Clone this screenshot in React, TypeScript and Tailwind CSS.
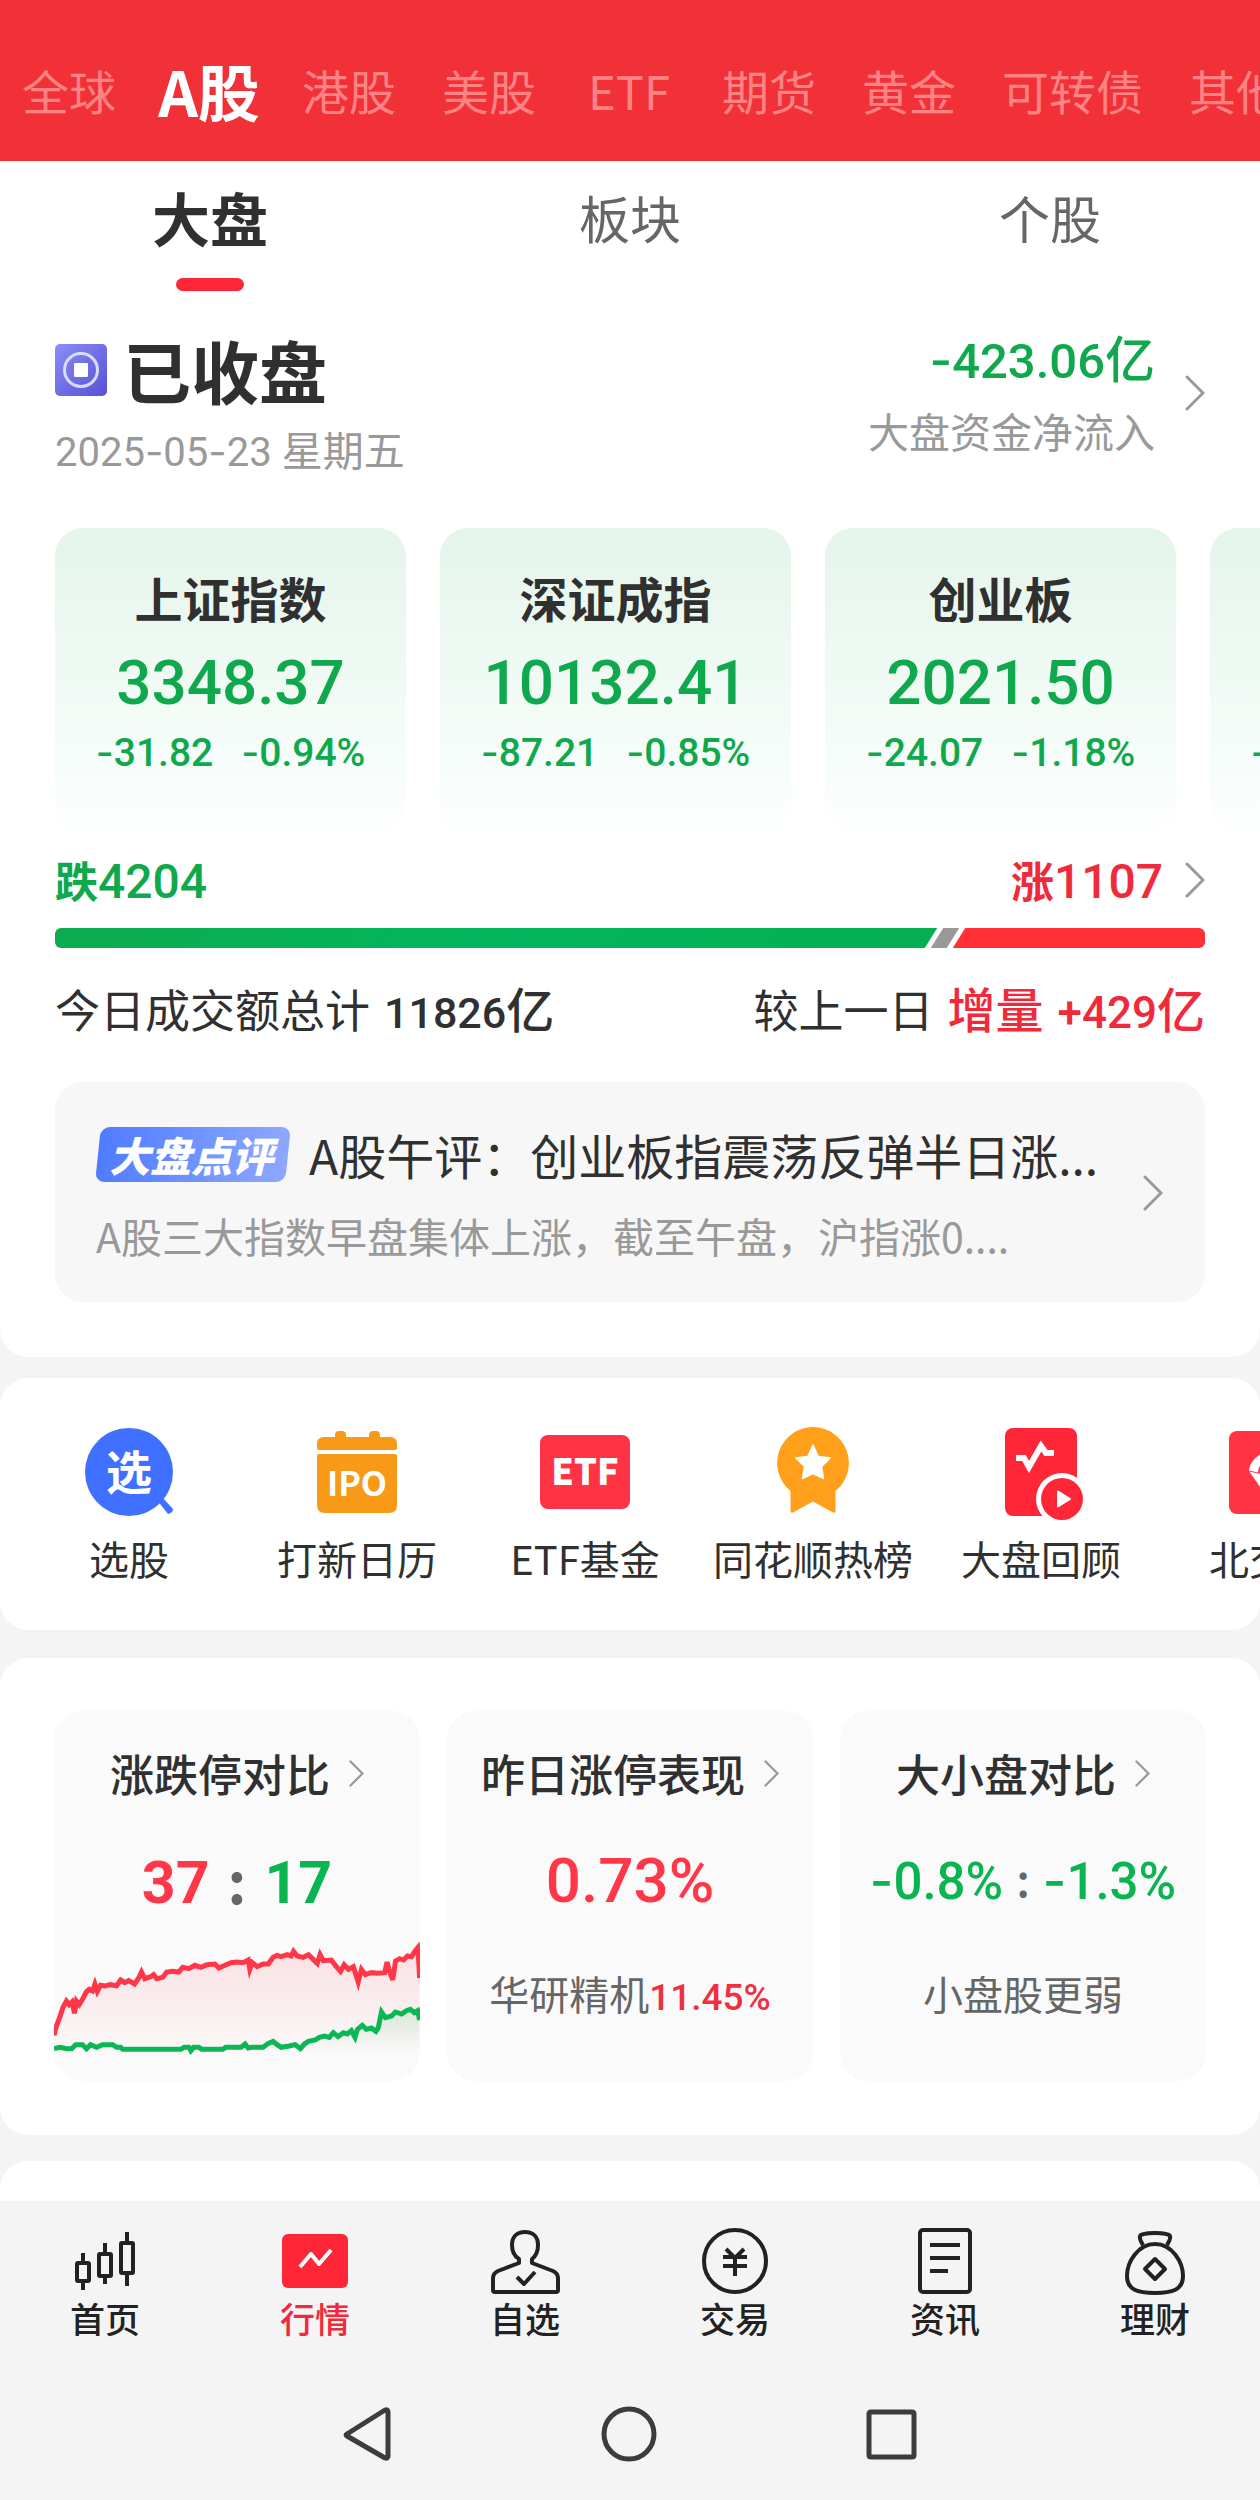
import React from "react";

const CJK = "font-['Noto_Sans_CJK_SC',sans-serif]";
const NUM = "font-['Roboto','Noto_Sans_CJK_SC',sans-serif]";

/* Figures in the numeric face; the leading minus uses a wider hyphen. */
function Num({ value, className = "" }: { value: string; className?: string }) {
  return (
    <span className={`${NUM} ${className}`}>
      {value.split(/(-)/).map((part, i) =>
        part === "-" ? (
          <span key={i} className="font-['Inter',sans-serif]">
            -
          </span>
        ) : (
          part
        ),
      )}
    </span>
  );
}

function Chevron({ small = false, className = "" }: { small?: boolean; className?: string }) {
  return (
    <svg
      viewBox="0 0 20 36"
      fill="none"
      stroke="#999"
      strokeWidth={3}
      strokeLinecap="round"
      className={`shrink-0 ${small ? "h-[27px] w-[15px]" : "h-[36px] w-[20px]"} ${className}`}
      aria-hidden="true"
    >
      <path d="M2 2 18 18 2 34" />
    </svg>
  );
}

const markets = ["全球", "A股", "港股", "美股", "ETF", "期货", "黄金", "可转债", "其他"];

function MarketTabs() {
  return (
    <header className="overflow-hidden bg-[#f23037] pt-[58px] pb-[39px]">
      <nav className="flex gap-[46px] px-[22px]">
        {markets.map((m) => (
          <button
            key={m}
            className={`flex min-w-[94px] shrink-0 justify-center whitespace-nowrap leading-[64px] ${
              m === "A股" ? "w-[94px] text-[62px] font-bold text-white" : "text-[47px] text-[#ff8385]"
            }`}
          >
            {m}
          </button>
        ))}
      </nav>
    </header>
  );
}

function SubTabs() {
  return (
    <nav className="grid grid-cols-3 pt-6">
      <button className="flex flex-col items-center text-[58px] leading-[64px] font-bold text-[#303030]">
        大盘
        <span className="mt-[29px] h-[13px] w-[68px] rounded-full bg-[#ff2638]" />
      </button>
      <button className="flex justify-center text-[51px] leading-[64px] text-[#666]">板块</button>
      <button className="flex justify-center text-[51px] leading-[64px] text-[#666]">个股</button>
    </nav>
  );
}

const indices = [
  { name: "上证指数", value: "3348.37", diff: "-31.82", pct: "-0.94%" },
  { name: "深证成指", value: "10132.41", diff: "-87.21", pct: "-0.85%" },
  { name: "创业板", value: "2021.50", diff: "-24.07", pct: "-1.18%" },
  { name: "科创50", value: "990.71", diff: "-13.57", pct: "-1.35%" },
];

function IndexCards() {
  return (
    <div className="mt-[55px] flex gap-[34px] overflow-hidden pl-[55px]">
      {indices.map((x) => (
        <button
          key={x.name}
          className="flex w-[351px] shrink-0 flex-col items-center rounded-[28px] bg-gradient-to-b from-[#e4f5eb] to-[#fcfffe] pt-[41px] pb-[57px]"
        >
          <span className="text-[48px] leading-[56px] font-bold text-[#303030]">{x.name}</span>
          <Num value={x.value} className="mt-[22px] text-[62px] leading-[72px] font-medium text-[#0fa84c]" />
          <span className="mt-[11px] flex h-[44px] gap-[28px] text-[39px] leading-[44px] font-medium text-[#0fa84c]">
            <Num value={x.diff} />
            <Num value={x.pct} />
          </span>
        </button>
      ))}
    </div>
  );
}

function Breadth() {
  return (
    <div className="px-[55px]">
      <div className="mt-[21px] flex h-[56px] items-center justify-between leading-[56px]">
        <span className="flex items-baseline text-[#0fa84c]">
          <span className="text-[43px] font-bold">跌</span>
          <Num value="4204" className="text-[48px] font-medium" />
        </span>
        <button className="flex items-center text-[#f02a3a]">
          <span className="flex items-baseline">
            <span className="text-[43px] font-bold">涨</span>
            <Num value="1107" className="text-[48px] font-medium" />
          </span>
          <Chevron className="ml-[22px]" />
        </button>
      </div>
      <div className="mt-5 flex h-[20px] gap-[6px] overflow-hidden rounded-[6px]">
        <div className="-ml-3 flex-[887] -skew-x-[32deg] bg-gradient-to-r from-[#0cab4e] via-[#02b65d] to-[#06ae52]" />
        <div className="w-[16px] -skew-x-[32deg] bg-[#999]" />
        <div className="-mr-3 flex-[258] -skew-x-[32deg] bg-[#ff3036]" />
      </div>
      <div className="mt-[34px] flex h-[56px] items-center justify-between leading-[56px] text-[#303030]">
        <span className="flex items-baseline gap-[14px] text-[45px]">
          今日成交额总计
          <span className="flex items-baseline font-medium">
            <Num value="11826" className="text-[43px]" />
            <span className="text-[48px]">亿</span>
          </span>
        </span>
        <span className="flex items-baseline gap-[14px] text-[45px]">
          较上一日
          <span className="flex items-baseline text-[48px] font-medium text-[#f02a3a]">
            增量
            <Num value="+429" className="ml-[14px] text-[44px]" />亿
          </span>
        </span>
      </div>
    </div>
  );
}

function Commentary() {
  return (
    <a
      href="#review"
      className="mx-[55px] mt-[44px] flex items-center justify-between rounded-[28px] bg-[#f7f7f7] pt-[44px] pr-[42px] pb-[43px] pl-[41px]"
    >
      <span className="flex flex-col">
        <span className="flex items-center gap-[19px] whitespace-nowrap">
          <span className="relative flex h-[55px] w-[194px] items-center justify-center pr-1">
            <span className="absolute inset-x-[2px] inset-y-0 -skew-x-6 rounded-[9px] bg-gradient-to-r from-[#4f7bff] to-[#8ea8ff]" />
            <span className="relative text-[41px] leading-[55px] font-black text-white italic">大盘点评</span>
          </span>
          <span className="text-[48px] leading-[56px] text-[#303030]">A股午评：创业板指震荡反弹半日涨...</span>
        </span>
        <span className="mt-[29px] text-[41px] leading-[48px] whitespace-nowrap text-[#999]">
          A股三大指数早盘集体上涨，截至午盘，沪指涨0....
        </span>
      </span>
      <Chevron />
    </a>
  );
}

function PickIcon() {
  return (
    <svg viewBox="0 0 96 96" className="h-24 w-24" aria-hidden="true">
      <circle cx="48" cy="48" r="44" fill="#4070ff" />
      <path d="M76 76 87 90q5-1 5-5L80 72z" fill="#4070ff" />
      <text x="48" y="65" textAnchor="middle" fontSize="46" fontWeight="700" fill="#fff">
        选
      </text>
    </svg>
  );
}

function IpoIcon() {
  return (
    <svg viewBox="0 0 96 96" className="h-24 w-24" fill="#f89a17" aria-hidden="true">
      <rect x="26" y="7" width="11" height="14" rx="4" />
      <rect x="60" y="7" width="11" height="14" rx="4" />
      <path d="M15 13h66q7 0 7 7v4q0 2-2 2H10q-2 0-2-2v-4q0-7 7-7z" />
      <path d="M10 30h76q2 0 2 2v49q0 8-8 8H16q-8 0-8-8V32q0-2 2-2z" />
      <text x="48" y="72" textAnchor="middle" fontSize="34" fontWeight="700" fill="#fff">
        IPO
      </text>
    </svg>
  );
}

function EtfIcon() {
  return (
    <svg viewBox="0 0 96 96" className="h-24 w-24" aria-hidden="true">
      <rect x="3" y="11" width="90" height="74" rx="8" fill="#ff3344" />
      <text x="48" y="61" textAnchor="middle" fontSize="36" fontWeight="900" fill="#fff">
        ETF
      </text>
    </svg>
  );
}

function MedalIcon() {
  return (
    <svg viewBox="0 0 96 96" className="h-24 w-24" aria-hidden="true">
      <path
        d="M48 3a36 36 0 0 1 22.500 64v20q0 2.500-2.500 1.500L48 77.500 28 88.500q-2.500 1-2.500-1.500V67A36 36 0 0 1 48 3z"
        fill="#ff9f1a"
      />
      <path
        d="m48 21 5.200 11.500 12 1.500-8.700 8.500 2 12L48 49.500 37.500 54.500l2-12-8.700-8.500 12-1.500z"
        fill="#fff"
        stroke="#fff"
        strokeWidth="1.500"
        strokeLinejoin="round"
      />
    </svg>
  );
}

function ReviewIcon() {
  return (
    <svg viewBox="0 0 96 96" className="h-24 w-24" aria-hidden="true">
      <rect x="12" y="4" width="72" height="88" rx="8" fill="#ff2638" />
      <path d="M23 34h8l5 9L48 22l5 7h8" fill="none" stroke="#fff" strokeWidth="6" />
      <circle cx="69" cy="75" r="26" fill="#fff" />
      <circle cx="69" cy="75" r="21" fill="#ff2638" />
      <path d="M65 67.500v15l12-7.500z" fill="#fff" stroke="#fff" strokeWidth="2" strokeLinejoin="round" />
    </svg>
  );
}

function NorthIcon() {
  return (
    <svg viewBox="0 0 96 96" className="h-24 w-24" aria-hidden="true">
      <rect x="8" y="7" width="80" height="83" rx="8" fill="#ff3344" />
      <path d="M28 47c0-6 5-13 12-17h16c7 4 12 11 12 17L48 76z" fill="#fff" />
      <path d="M28 47l9 2h22l9-2" stroke="#ff3344" strokeWidth="1" fill="none" />
      <path d="M37 49q0-6 4-10h14q4 4 4 10z" fill="#ff3344" />
    </svg>
  );
}

const shortcuts = [
  { label: "选股", Icon: PickIcon },
  { label: "打新日历", Icon: IpoIcon },
  { label: "ETF基金", Icon: EtfIcon },
  { label: "同花顺热榜", Icon: MedalIcon },
  { label: "大盘回顾", Icon: ReviewIcon },
  { label: "北交所", Icon: NorthIcon },
];

function Shortcuts() {
  return (
    <nav className="mt-[21px] flex gap-7 overflow-hidden rounded-[28px] bg-white pt-[46px] pb-[48px] pl-[29px]">
      {shortcuts.map(({ label, Icon }) => (
        <button key={label} className="flex w-[200px] shrink-0 flex-col items-center">
          <Icon />
          <span className="mt-[14px] text-[40px] leading-[48px] whitespace-nowrap text-[#303030]">{label}</span>
        </button>
      ))}
    </nav>
  );
}

const riseLine =
  "134,1038 140,1010 148,985 156,955 165,935 172,946 179,938 185,972 190,935 197,946 205,930 215,907 222,900 230,905 236,884 242,906 250,888 262,890 275,886 290,889 300,872 310,880 320,874 335,884 345,866 352,848 360,868 375,862 382,856 390,868 405,864 415,848 430,846 445,848 455,834 470,838 485,828 500,834 515,826 535,824 545,836 560,828 575,820 590,818 605,820 618,812 622,840 628,820 640,832 655,824 668,824 680,804 690,798 700,802 715,796 725,800 731,786 740,800 755,804 768,796 780,810 790,822 797,796 805,814 825,812 835,828 848,846 857,826 868,840 880,832 892,878 900,840 910,856 925,850 940,852 958,850 964,818 970,846 978,872 985,815 995,808 1005,812 1015,800 1025,802 1032,788 1040,776 1043,820 1045,866";
const fallLine =
  "134,1078 150,1074 165,1078 178,1078 188,1066 205,1066 215,1078 225,1066 240,1074 255,1066 280,1066 290,1074 300,1074 305,1080 450,1080 458,1074 470,1074 475,1084 482,1074 495,1074 502,1080 555,1080 562,1074 600,1074 610,1064 618,1076 628,1074 655,1074 668,1062 680,1056 690,1066 700,1074 720,1070 735,1066 748,1078 758,1064 768,1056 785,1052 795,1044 808,1040 820,1044 830,1030 842,1042 855,1030 865,1034 875,1024 884,1044 890,1020 902,1008 912,1020 925,1016 936,1026 942,1015 950,968 960,985 975,980 985,968 1000,974 1012,964 1022,960 1032,970 1040,964 1045,992";

function LimitChart() {
  return (
    <svg
      viewBox="134 740 912 345"
      preserveAspectRatio="none"
      className="mt-[17px] h-[115px] w-full overflow-visible"
      role="img"
      aria-label="涨跌停走势"
    >
      <defs>
        <linearGradient id="rise" x1="0" y1="0" x2="0" y2="1">
          <stop offset="0" stopColor="#ff3344" stopOpacity="0.13" />
          <stop offset="1" stopColor="#ff3344" stopOpacity="0.01" />
        </linearGradient>
        <linearGradient id="fall" x1="0" y1="0" x2="0" y2="1">
          <stop offset="0" stopColor="#0ab551" stopOpacity="0.14" />
          <stop offset="1" stopColor="#0ab551" stopOpacity="0" />
        </linearGradient>
      </defs>
      <polygon points={`${riseLine} 1045,1085 134,1085`} fill="url(#rise)" />
      <polygon points={`${fallLine} 1045,1085 134,1085`} fill="url(#fall)" />
      <polyline points={riseLine} fill="none" stroke="#ff3748" strokeWidth="5" vectorEffect="non-scaling-stroke" />
      <polyline points={fallLine} fill="none" stroke="#0bb753" strokeWidth="5" vectorEffect="non-scaling-stroke" />
    </svg>
  );
}

function StatCard({ title, children }: { title: string; children: React.ReactNode }) {
  return (
    <article className="flex min-w-0 flex-col overflow-hidden rounded-[28px] bg-[#fafafa] pt-[34px]">
      <button className="flex items-center justify-center text-[44px] leading-[56px] font-medium whitespace-nowrap text-[#303030]">
        {title}
        <Chevron small className="ml-[19px]" />
      </button>
      {children}
    </article>
  );
}

function Colon({ small = false }: { small?: boolean }) {
  return <span className={`pb-2 text-[#666] ${small ? "text-[46px]" : "text-[58px]"}`}>:</span>;
}

function Stats() {
  return (
    <section className="mt-7 grid grid-cols-3 gap-[27px] rounded-[28px] bg-white px-[54px] pt-[53px] pb-[54px]">
      <StatCard title="涨跌停对比">
        <p className="mt-[46px] flex h-[72px] items-center justify-center gap-[18px] text-[59px] leading-[72px] font-bold">
          <Num value="37" className="text-[#ff3748]" />
          <Colon />
          <Num value="17" className="text-[#0ab551]" />
        </p>
        <LimitChart />
        <div className="h-[30px]" />
      </StatCard>
      <StatCard title="昨日涨停表现">
        <p className="mt-[44px] flex h-[72px] items-center justify-center text-[62px] leading-[72px] font-medium text-[#ff3748]">
          <Num value="0.73%" />
        </p>
        <p className="mt-[52px] flex items-baseline justify-center text-[40px] leading-[48px] whitespace-nowrap text-[#666]">
          华研精机
          <Num value="11.45%" className="text-[37px] font-medium text-[#f0303f]" />
        </p>
      </StatCard>
      <StatCard title="大小盘对比">
        <p className="mt-[44px] flex h-[72px] items-center justify-center gap-[13px] text-[51px] leading-[72px] font-medium whitespace-nowrap text-[#0ab551]">
          <Num value="-0.8%" />
          <Colon small />
          <Num value="-1.3%" />
        </p>
        <p className="mt-[52px] text-center text-[40px] leading-[48px] text-[#666]">小盘股更弱</p>
      </StatCard>
    </section>
  );
}

/* Bottom navigation icons share an 80 × 72 box. */
const navItems: { label: string; icon: React.ReactNode }[] = [
  {
    label: "首页",
    icon: (
      <>
        <rect x="12" y="39" width="12" height="18" rx="1" />
        <rect x="34" y="30" width="12" height="22" rx="1" />
        <rect x="56" y="19" width="12" height="30" rx="1" />
        <path d="M18 29v10M18 57v9M40 19v11M40 52v8M62 8v11M62 49v13" />
      </>
    ),
  },
  {
    label: "行情",
    icon: (
      <>
        <rect x="7" y="10" width="66" height="54" rx="6" fill="#ff2638" stroke="none" />
        <path d="m25 43 11-13 8 10 12-14" stroke="#fff" />
      </>
    ),
  },
  {
    label: "自选",
    icon: (
      <>
        <path d="M34 39v-4c-5-3-7-8-7-14 0-8 5-13 13-13s13 5 13 13c0 6-2 11-6 14v4l21 8c4 2 5 4 5 7v12q0 2-2 2H10q-2 0-2-2V54c0-3 1-5 5-7z" />
        <path d="m32 53 7 7 11-12" />
      </>
    ),
  },
  {
    label: "交易",
    icon: (
      <>
        <circle cx="40" cy="37" r="31" />
        <path d="m31 25 9 9 9-9M28 33h24M28 42h24M40 34v18" />
      </>
    ),
  },
  {
    label: "资讯",
    icon: (
      <>
        <rect x="15" y="6" width="50" height="62" rx="3" />
        <path d="M25 21h30M25 34h30M25 47h18" />
      </>
    ),
  },
  {
    label: "理财",
    icon: (
      <>
        <path d="M28 21c-2-4-4-6-3-9 1-4 29-4 30 0 1 3-1 5-3 9" />
        <path d="M40 20c-17 0-28 18-28 32 0 14 11 17 28 17s28-3 28-17c0-14-11-32-28-32z" />
        <path d="m40 35 10 10-10 10-10-10z" />
      </>
    ),
  },
];

function BottomNav() {
  return (
    <nav className="grid grid-cols-6 pt-[23px]">
      {navItems.map(({ label, icon }) => (
        <button
          key={label}
          className={`flex flex-col items-center text-[35px] leading-[40px] font-medium ${
            label === "行情" ? "text-[#f02a3a]" : "text-[#222]"
          }`}
        >
          <svg
            viewBox="0 0 80 72"
            className="h-[72px] w-20"
            fill="none"
            stroke="#222"
            strokeWidth="4"
            strokeLinejoin="round"
            aria-hidden="true"
          >
            {icon}
          </svg>
          <span className="mt-[2px]">{label}</span>
        </button>
      ))}
    </nav>
  );
}

function SystemBar() {
  return (
    <div className="mt-[66px] flex justify-center gap-[202px] pb-9">
      {[
        { name: "返回", d: "M9 30 47 6q3-1 3 2v44q0 3-3 2L9 32q-2-1 0-2z" },
        { name: "主屏幕", d: "M29 5a25 25 0 1 0 0 50 25 25 0 1 0 0-50z" },
        { name: "最近任务", d: "M9 8h41q2 0 2 2v41q0 2-2 2H9q-2 0-2-2V10q0-2 2-2z" },
      ].map((b) => (
        <button key={b.name} aria-label={b.name} className="h-[60px] w-[60px]">
          <svg viewBox="0 0 60 60" fill="none" stroke="#3c3c3c" strokeWidth="5" strokeLinejoin="round">
            <path d={b.d} />
          </svg>
        </button>
      ))}
    </div>
  );
}

export default function App() {
  return (
    <div className={`flex min-h-screen flex-col overflow-hidden bg-[#f4f4f4] ${CJK}`}>
      <MarketTabs />
      <main className="flex flex-1 flex-col">
        <section className="rounded-b-[28px] bg-white pb-[55px]">
          <SubTabs />
          <div className="mt-10 flex items-start justify-between px-[55px]">
            <div className="pt-[3px]">
              <h1 className="flex items-center gap-[16px] text-[68px] leading-[72px] font-bold text-[#303030]">
                <svg viewBox="0 0 52 52" className="h-[52px] w-[52px]" aria-hidden="true">
                  <defs>
                    <linearGradient id="coin" x1="0" y1="0" x2="1" y2="1">
                      <stop offset="0" stopColor="#8a8df8" />
                      <stop offset="1" stopColor="#5750d6" />
                    </linearGradient>
                  </defs>
                  <rect width="52" height="52" rx="5" fill="url(#coin)" />
                  <circle cx="26" cy="26" r="16.500" fill="none" stroke="#d9dcff" strokeWidth="3" />
                  <rect x="19" y="19" width="14" height="14" rx="1" fill="#fff" />
                </svg>
                已收盘
              </h1>
              <p className="mt-[18px] flex h-[49px] items-baseline gap-[10px] text-[41px] leading-[48px] text-[#999]">
                <Num value="2025-05-23" className="text-[40px]" />
                星期五
              </p>
            </div>
            <button className="flex items-center gap-[30px]">
              <span className="flex flex-col items-end">
                <span className="-mt-[3px] flex h-[58px] items-baseline text-[50px] leading-[56px] font-medium text-[#0fa84c]">
                  <Num value="-423.06" className="text-[49px]" />亿
                </span>
                <span className="mt-[20px] text-[41px] leading-[48px] text-[#999]">大盘资金净流入</span>
              </span>
              <Chevron />
            </button>
          </div>
          <IndexCards />
          <Breadth />
          <Commentary />
        </section>
        <Shortcuts />
        <Stats />
        <section className="mt-[26px] min-h-[39px] flex-1 rounded-t-[28px] bg-white" />
      </main>
      <footer>
        <BottomNav />
        <SystemBar />
      </footer>
    </div>
  );
}
